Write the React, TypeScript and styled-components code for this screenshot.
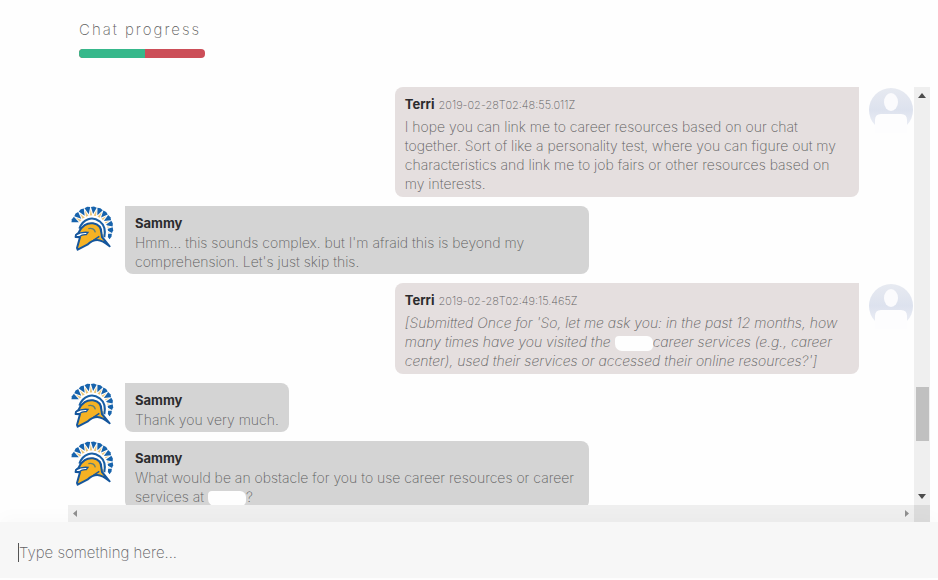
import React from "react";
import styled, { createGlobalStyle, css } from "styled-components";

const GlobalStyle = createGlobalStyle`
  * { box-sizing: border-box; }
  body {
    margin: 0;
    background: #fefefe;
    color: #5e5e60;
    font-family: Inter, "Liberation Sans", sans-serif;
    font-size: 14px;
    font-weight: 200;
    line-height: 19px;
  }
`;

const Page = styled.div`
  display: flex;
  flex-direction: column;
  height: 100vh;
  min-height: 400px;
  padding-bottom: 2px;
`;

const Progress = styled.section`
  flex: none;
  height: 87px;
  padding: 20px 0 0 79px;
`;

const ProgressTitle = styled.h1`
  margin: 0 0 9px;
  font-size: 15px;
  font-weight: 200;
  line-height: 20px;
  letter-spacing: 2px;
`;

const ProgressTrack = styled.div`
  width: 126px;
  height: 9px;
  border-radius: 4px;
  overflow: hidden;
  background: #cc4e58;
`;

const ProgressFill = styled.div`
  height: 100%;
  background: #36b88b;
`;

const ChatPanel = styled.main`
  flex: 1;
  min-height: 0;
  margin: 0 8px 0 68px;
  display: grid;
  grid-template-columns: minmax(0, 1fr) 16px;
  grid-template-rows: minmax(0, 1fr) 17px;
`;

const Messages = styled.div`
  display: flex;
  flex-direction: column;
  gap: 9px;
  overflow: hidden;
  padding-left: 2px;
`;

const Row = styled.article<{ $own?: boolean }>`
  flex: none;
  display: flex;
  align-items: flex-start;
  gap: 10px;
  flex-direction: ${(p) => (p.$own ? "row-reverse" : "row")};
`;

const Avatar = styled.svg`
  flex: none;
  width: 45px;
  height: 46px;
`;

const Bubble = styled.div<{ $own?: boolean; $fit?: boolean }>`
  ${(p) => (p.$fit ? "max-width: 55%;" : "width: 55%;")}
  padding: 8px 10px 3px;
  white-space: nowrap;
  ${(p) =>
    p.$own
      ? css`
          padding-bottom: 4px;
          background: #e5dfdf;
          border-radius: 8px 0 8px 8px;
        `
      : css`
          background: #d4d4d4;
          border-radius: 0 8px 8px 8px;
        `}
`;

const Head = styled.header<{ $own?: boolean }>`
  margin-bottom: ${(p) => (p.$own ? "2px" : "0")};
  font-size: 13px;
`;

const Name = styled.strong`
  color: #2c2c2e;
  font-weight: 700;
`;

const Time = styled.time`
  margin-left: 4px;
  font-size: 11px;
`;

const Text = styled.p<{ $note?: boolean }>`
  margin: 0;
  font-style: ${(p) => (p.$note ? "italic" : "normal")};
`;

const Redacted = styled.span`
  display: inline-block;
  width: 38px;
  height: 15px;
  vertical-align: middle;
  background: #fefefe;
  border-radius: 4px 6px 5px 7px;
`;

const Bar = styled.div<{ $horizontal?: boolean }>`
  display: flex;
  flex-direction: ${(p) => (p.$horizontal ? "row" : "column")};
  align-items: center;
  justify-content: space-between;
  padding: ${(p) => (p.$horizontal ? "0 5px" : "6px 0")};
  background: #efefef;
`;

const Track = styled.div`
  flex: 1;
  display: flex;
  flex-direction: column;
  width: 13px;
`;

const TrackSpace = styled.div<{ $grow: number }>`
  flex: ${(p) => p.$grow} 1 0;
`;

const Thumb = styled.div`
  height: 54px;
  background: #c0c0c0;
`;

const Corner = styled.div`
  background: #dcdcdc;
`;

const Arrow = styled.svg`
  display: block;
  flex: none;
`;

const Composer = styled.form`
  flex: none;
  display: flex;
  align-items: center;
  height: 56px;
  padding: 10px 18px 6px;
  background: #f7f7f7;
  box-shadow: 0 -6px 16px rgba(0, 0, 0, 0.02);
`;

const Caret = styled.span`
  width: 1px;
  height: 19px;
  background: #555;
`;

const Field = styled.input`
  flex: 1;
  min-width: 0;
  height: 24px;
  padding: 0;
  border: 0;
  outline: 0;
  background: transparent;
  color: #555;
  font: inherit;
  font-size: 15px;
  &::placeholder {
    color: #626265;
    opacity: 1;
  }
`;

const CREST = { x: 65, y: 66 };

function polar(radius: number, degrees: number) {
  const a = (degrees * Math.PI) / 180;
  return `${(CREST.x + radius * Math.cos(a)).toFixed(1)},${(CREST.y - radius * Math.sin(a)).toFixed(1)}`;
}

const plumes = Array.from({ length: 11 }, (_, i) => 156 - i * 18);

function SpartanAvatar() {
  return (
    <Avatar viewBox="0 0 135 138" role="img" aria-label="Sammy">
      {plumes.map((d) => (
        <g key={d}>
          <polygon
            points={`${polar(56, d - 9)} ${polar(37, d - 3)} ${polar(37, d - 15)}`}
            fill="#ecc678"
          />
          <polygon
            points={`${polar(63, d + 8)} ${polar(65, d)} ${polar(63, d - 8)} ${polar(42, d)}`}
            fill="#1763ac"
          />
        </g>
      ))}
      <path
        d="M27 68C36 36 66 27 90 43C107 55 110 76 107 94L119 118"
        fill="none"
        stroke="#fff"
        strokeWidth="13"
      />
      <path
        d="M28 68C39 38 67 30 89 46C103 57 107 76 103 94"
        fill="none"
        stroke="#195fa5"
        strokeWidth="6"
      />
      <path
        d="M26 80C34 60 52 49 69 52C86 55 94 66 94 80L96 93L119 121Q97 102 82 102Q67 102 52 116L23 131L21 126L30 94L17 93L18 87Z"
        fill="#f6b223"
        stroke="#15569c"
        strokeWidth="6"
        strokeLinejoin="round"
      />
      <path
        d="M19 86C32 78 44 78 54 79L49 86C40 85 34 87 28 92L17 92Z"
        fill="#fff"
        stroke="#15569c"
        strokeWidth="4"
      />
      <path
        d="M55 68C65 65 74 69 76 79"
        fill="none"
        stroke="#5c7f78"
        strokeWidth="4"
      />
      <path d="M70 103L88 91" fill="none" stroke="#15569c" strokeWidth="4" />
    </Avatar>
  );
}

function GuestAvatar() {
  return (
    <Avatar viewBox="0 0 45 46" role="img" aria-label="Terri">
      <defs>
        <linearGradient id="guest" x1="0" y1="0" x2="0" y2="1">
          <stop offset="0" stopColor="#e7eaf1" />
          <stop offset="0.5" stopColor="#dde2ee" />
          <stop offset="1" stopColor="#f0f2f8" />
        </linearGradient>
      </defs>
      <circle cx="22" cy="23" r="22" fill="url(#guest)" />
      <ellipse cx="22" cy="15" rx="7" ry="9" fill="#fbfbfd" />
      <path d="M6 46V33Q6 27 12 27H32Q38 27 38 33V46Z" fill="#fdfdfe" />
    </Avatar>
  );
}

interface MessageProps {
  name: string;
  time?: string;
  fit?: boolean;
  note?: boolean;
  children: React.ReactNode;
}

function Message({ name, time, fit, note, children }: MessageProps) {
  const own = Boolean(time);
  return (
    <Row $own={own}>
      {own ? <GuestAvatar /> : <SpartanAvatar />}
      <Bubble $own={own} $fit={fit}>
        <Head $own={own}>
          <Name>{name}</Name>
          {time && <Time dateTime={time}>{time}</Time>}
        </Head>
        <Text $note={note}>{children}</Text>
      </Bubble>
    </Row>
  );
}

export default function App() {
  return (
    <>
      <GlobalStyle />
      <Page>
        <Progress>
          <ProgressTitle id="progress-title">Chat progress</ProgressTitle>
          <ProgressTrack
            role="progressbar"
            aria-labelledby="progress-title"
            aria-valuenow={52}
            aria-valuemin={0}
            aria-valuemax={100}
          >
            <ProgressFill style={{ width: "52%" }} />
          </ProgressTrack>
        </Progress>
        <ChatPanel>
          <Messages>
            <Message name="Terri" time="2019-02-28T02:48:55.011Z">
              I hope you can link me to career resources based on our chat
              <br />
              together. Sort of like a personality test, where you can figure out my
              <br />
              characteristics and link me to job fairs or other resources based on
              <br />
              my interests.
            </Message>
            <Message name="Sammy">
              Hmm... this sounds complex. but I'm afraid this is beyond my
              <br />
              comprehension. Let's just skip this.
            </Message>
            <Message name="Terri" time="2019-02-28T02:49:15.465Z" note>
              [Submitted Once for 'So, let me ask you: in the past 12 months, how
              <br />
              many times have you visited the <Redacted />
              career services (e.g., career
              <br />
              center), used their services or accessed their online resources?']
            </Message>
            <Message name="Sammy" fit>
              Thank you very much.
            </Message>
            <Message name="Sammy">
              What would be an obstacle for you to use career resources or career
              <br />
              services at <Redacted />?
            </Message>
          </Messages>
          <Bar>
            <Arrow width="8" height="5" viewBox="0 0 8 5">
              <path d="M0 5L4 0L8 5Z" fill="#4c4c4c" />
            </Arrow>
            <Track>
              <TrackSpace $grow={289} />
              <Thumb />
              <TrackSpace $grow={53} />
            </Track>
            <Arrow width="8" height="5" viewBox="0 0 8 5">
              <path d="M0 0L4 5L8 0Z" fill="#4c4c4c" />
            </Arrow>
          </Bar>
          <Bar $horizontal>
            <Arrow width="5" height="7" viewBox="0 0 5 7">
              <path d="M4 0L0 3.5L4 7Z" fill="#8f8f8f" />
            </Arrow>
            <Arrow width="5" height="7" viewBox="0 0 5 7">
              <path d="M1 0L5 3.5L1 7Z" fill="#8f8f8f" />
            </Arrow>
          </Bar>
          <Corner />
        </ChatPanel>
        <Composer onSubmit={(e) => e.preventDefault()}>
          <Caret />
          <Field type="text" aria-label="Message" placeholder="Type something here..." />
        </Composer>
      </Page>
    </>
  );
}
